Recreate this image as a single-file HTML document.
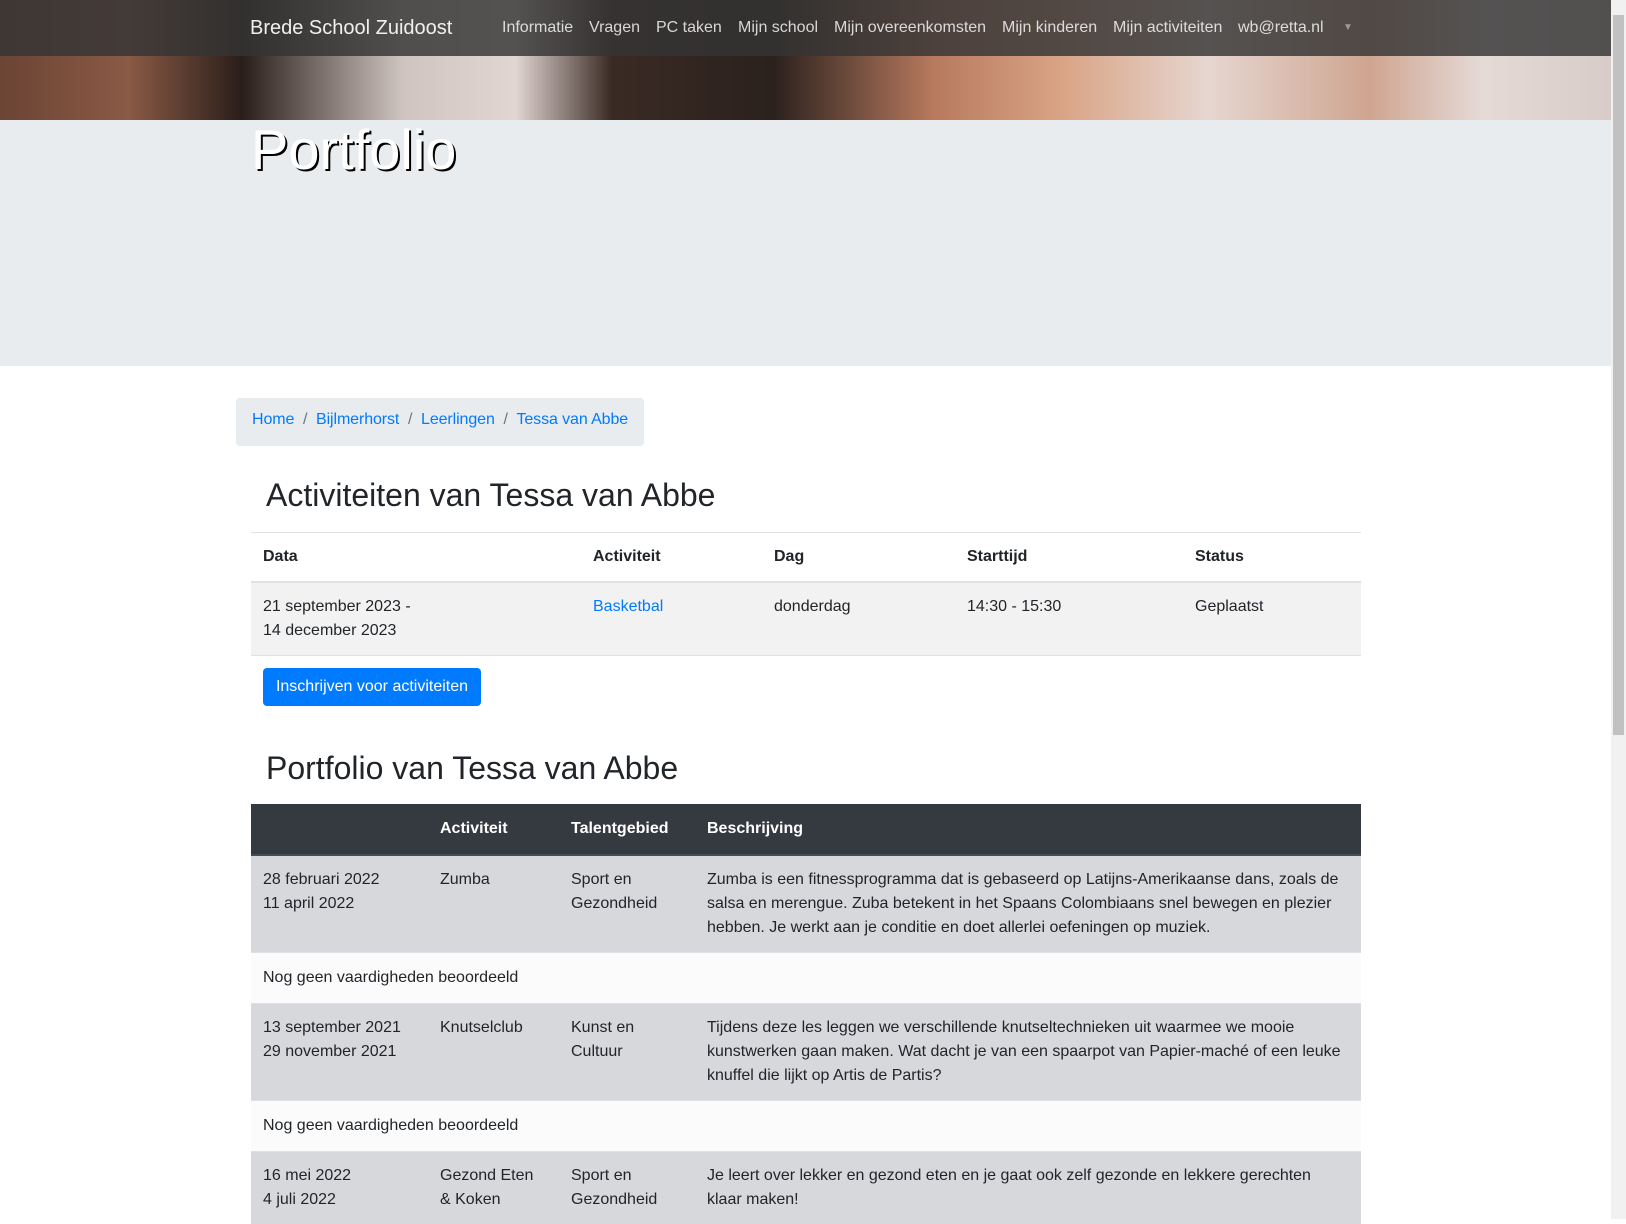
<!DOCTYPE html>
<html><head><meta charset="utf-8"><style>
*{box-sizing:border-box}
body{margin:0;width:1626px;height:1219px;overflow:hidden;font-family:"Liberation Sans",sans-serif;font-size:16px;color:#212529;background:#fff;position:relative}
.hero{position:absolute;left:0;top:0;width:1611px;height:120px;background:linear-gradient(90deg,#6b4434 0%,#8a5a45 8%,#2a1e1a 15%,#cfc4c0 25%,#e2d6d2 32%,#3a2a24 38%,#2b211d 48%,#b87a5e 58%,#d9a486 66%,#e6d6d0 75%,#cfa590 85%,#e5dad6 92%,#d8ccc8 100%)}
.nav{position:absolute;left:0;top:0;width:1611px;height:56px;background:rgba(52,52,52,.82)}
.nav span{position:absolute;top:19px;color:rgba(255,255,255,.8);font-size:16px;white-space:nowrap}
.brand{left:250px!important;top:17px!important;font-size:20px!important;color:#f0f0f0!important}
.jumbo{position:absolute;left:0;top:120px;width:1611px;height:246px;background:#e9ecef}
.jumbo h1{position:absolute;left:251px;top:-2px;margin:0;font-size:56px;font-weight:400;color:#fff;text-shadow:2px 2px 0 #000;line-height:64px}
.sb{position:absolute;right:0;top:0;width:15px;height:1219px;background:#f1f1f1}
.sb div{position:absolute;left:2px;top:15px;width:11px;height:720px;background:#c1c1c1}
.bc{position:absolute;left:236px;top:398px;width:408px;height:48px;background:#e9ecef;border-radius:4px;padding:13px 16px;color:#6c757d;font-size:16px;white-space:nowrap;letter-spacing:-0.1px}
.bc a{color:#007bff;text-decoration:none}
h2{position:absolute;margin:0;font-size:32px;font-weight:400;left:266px}
table{position:absolute;left:251px;width:1110px;border-collapse:collapse;font-size:16px;line-height:24px}
td,th{padding:12px;text-align:left;vertical-align:top}
.t1 th{border-top:1px solid #dee2e6;border-bottom:2px solid #dee2e6}
.t1 td{background:#f2f2f2;border-bottom:1px solid #dee2e6}
.t2 th{background:#343a40;color:#fff;border-bottom:2px solid #454d55}
.t2 td{border-top:1px solid #dee2e6}
.t2 tr.g td{background:#d7d8dc}
.t2 tr.w td{background:#fbfbfb;padding:13px 12px}
a{color:#007bff;text-decoration:none}
.btn{position:absolute;left:263px;top:668px;width:218px;height:38px;background:#007bff;color:#fff;border-radius:4px;font-size:16px;line-height:38px;text-align:center}
</style></head><body>
<div class="hero"></div>
<div class="nav">
<span class="brand">Brede School Zuidoost</span>
<span style="left:502px">Informatie</span>
<span style="left:589px">Vragen</span>
<span style="left:656px">PC taken</span>
<span style="left:738px">Mijn school</span>
<span style="left:834px">Mijn overeenkomsten</span>
<span style="left:1002px">Mijn kinderen</span>
<span style="left:1113px">Mijn activiteiten</span>
<span style="left:1238px">wb@retta.nl</span>
<span style="left:1343px;top:22px;font-size:10px;color:#999">▼</span>
</div>
<div class="jumbo"><h1>Portfolio</h1></div>
<div class="bc"><a>Home</a>&nbsp; / &nbsp;<a>Bijlmerhorst</a>&nbsp; / &nbsp;<a>Leerlingen</a>&nbsp; / &nbsp;<a>Tessa van Abbe</a></div>
<h2 style="top:477px">Activiteiten van Tessa van Abbe</h2>
<table class="t1" style="top:532px">
<tr><th style="width:330px">Data</th><th style="width:181px">Activiteit</th><th style="width:193px">Dag</th><th style="width:228px">Starttijd</th><th>Status</th></tr>
<tr><td>21 september 2023 -<br>14 december 2023</td><td><a>Basketbal</a></td><td>donderdag</td><td>14:30 - 15:30</td><td>Geplaatst</td></tr>
</table>
<div class="btn">Inschrijven voor activiteiten</div>
<h2 style="top:750px">Portfolio van Tessa van Abbe</h2>
<table class="t2" style="top:804px">
<tr><th style="width:177px;padding:13px 12px">&nbsp;</th><th style="width:131px;padding:13px 12px">Activiteit</th><th style="width:136px;padding:13px 12px">Talentgebied</th><th style="padding:13px 12px">Beschrijving</th></tr>
<tr class="g"><td>28 februari 2022<br>11 april 2022</td><td>Zumba</td><td>Sport en Gezondheid</td><td>Zumba is een fitnessprogramma dat is gebaseerd op Latijns-Amerikaanse dans, zoals de salsa en merengue. Zuba betekent in het Spaans Colombiaans snel bewegen en plezier hebben. Je werkt aan je conditie en doet allerlei oefeningen op muziek.</td></tr>
<tr class="w"><td colspan="4">Nog geen vaardigheden beoordeeld</td></tr>
<tr class="g"><td>13 september 2021<br>29 november 2021</td><td>Knutselclub</td><td>Kunst en Cultuur</td><td>Tijdens deze les leggen we verschillende knutseltechnieken uit waarmee we mooie kunstwerken gaan maken. Wat dacht je van een spaarpot van Papier-maché of een leuke knuffel die lijkt op Artis de Partis?</td></tr>
<tr class="w"><td colspan="4">Nog geen vaardigheden beoordeeld</td></tr>
<tr class="g"><td>16 mei 2022<br>4 juli 2022</td><td>Gezond Eten &amp; Koken</td><td>Sport en Gezondheid</td><td>Je leert over lekker en gezond eten en je gaat ook zelf gezonde en lekkere gerechten klaar maken!</td></tr>
</table>
<div class="sb"><div></div></div>
</body></html>
